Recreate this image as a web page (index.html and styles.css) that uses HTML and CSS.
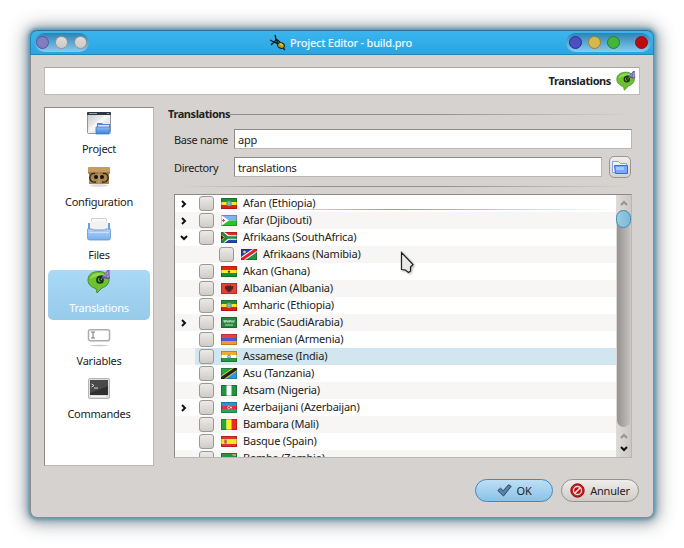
FILE: index.html
```html
<!DOCTYPE html>
<html lang="en">
<head>
<meta charset="utf-8">
<title>Project Editor - build.pro</title>
<link rel="stylesheet" href="styles.css">
</head>
<body>
<svg class="defs" width="0" height="0">
  <defs>
    <linearGradient id="gBlue" x1="0" y1="0" x2="0" y2="1"><stop offset="0" stop-color="#8dbdf5"/><stop offset="1" stop-color="#3b7fdc"/></linearGradient>
    <linearGradient id="gBox" x1="0" y1="0" x2="0" y2="1"><stop offset="0" stop-color="#b7d4f7"/><stop offset="1" stop-color="#76aeee"/></linearGradient>
    <linearGradient id="gScreen" x1="0" y1="0" x2="1" y2="1"><stop offset="0" stop-color="#c4c4c4"/><stop offset=".5" stop-color="#f2f2f2"/><stop offset="1" stop-color="#d4d4d4"/></linearGradient>
    <symbol id="bubble" viewBox="0 0 24 24">
      <path d="M1 10C1 4 6 1.500 12 1.500S22 5 22 10c0 4-3 6.500-7 8l-5 5-1-4.500C4 17.500 1 14 1 10z" fill="#6cc22c" stroke="#4c8a35"/>
      <path d="M3 9c1-4 5-6 9-6 3 0 6 1 7 3-5-1-12 0-16 3z" fill="#8edc53"/>
      <path d="M17 8c-1-3-7-2-7 2s6 4 6 0-4-2-3 0 3 1 3-1" fill="none" stroke="#19351d" stroke-width="1.700"/>
      <path d="M21 9V2l-4 5h6" fill="none" stroke="#665095" stroke-width="3"/>
      <path d="M21 8V2l-4 4h6" fill="none" stroke="#a795d0" stroke-width="1.200"/>
    </symbol>
    <symbol id="ethiopia" viewBox="0 0 16 11"><path fill="#258b35" d="M0 0h16v4H0z"/><path fill="#f6e826" d="M0 4h16v3H0z"/><path fill="#e51c16" d="M0 7h16v4H0z"/><circle cx="8" cy="5.500" r="2.800" fill="#5aa6b4"/><circle cx="8" cy="5.500" r="1" fill="#c5cf58"/></symbol>
    <symbol id="djibouti" viewBox="0 0 16 11"><path fill="#78b5ef" d="M0 0h16v5.500H0z"/><path fill="#22c629" d="M0 5.500h16V11H0z"/><path fill="#fff" d="M0 0l8 5.500L0 11z"/><path fill="#e73f3f" d="M2 4h1v1h1v1H3v1H2V6H1V5h1z"/></symbol>
    <symbol id="southafrica" viewBox="0 0 16 11"><path fill="#e32a24" d="M0 0h16v4H0z"/><path fill="#2647af" d="M0 7h16v4H0z"/><path d="M0 0l7 5.500h9M0 11l7-5.500" stroke="#fff" stroke-width="4.500" fill="none"/><path fill="#222" d="M0 1l5 4.500L0 10z"/><path d="M0 0l6.500 5.500H16M0 11l6.500-5.500" stroke="#24893a" stroke-width="2.500" fill="none"/><path d="M0 2.500l3.500 3L0 8.500" stroke="#f1c943" fill="#222"/></symbol>
    <symbol id="namibia" viewBox="0 0 16 11"><path fill="#2a45a0" d="M0 0h16L0 11z"/><path fill="#20933d" d="M16 0v11H0z"/><path d="M0 11L16 0" stroke="#fff" stroke-width="5"/><path d="M0 11L16 0" stroke="#e2212d" stroke-width="3"/><circle cx="3.500" cy="3" r="1.300" fill="#f6d64f"/></symbol>
    <symbol id="ghana" viewBox="0 0 16 11"><path fill="#ec2219" d="M0 0h16v4H0z"/><path fill="#faf02b" d="M0 4h16v3H0z"/><path fill="#159334" d="M0 7h16v4H0z"/><path fill="#38381d" d="M8 4l.5 1H9.500L8.800 6l.2 1L8 6.500 7 7l.2-1-.7-1h1z"/></symbol>
    <symbol id="albania" viewBox="0 0 16 11"><path fill="#e34036" d="M0 0h16v11H0z"/><path fill="#4c2522" d="M6 2l2 1 2-1v1.500l2-.5v3l-2 1 1 1-2 .5-1 1-1-1L5 8l1-1-2-1V3l2 .5z"/></symbol>
    <symbol id="saudi" viewBox="0 0 16 11"><path fill="#27843a" d="M0 0h16v11H0z"/><path d="M3 3v2h2V3m1 2h3V3m1 2h3V3M3 4h9M4 8h8" fill="none" stroke="#cae6cc" stroke-width=".9"/></symbol>
    <symbol id="armenia" viewBox="0 0 16 11"><path fill="#e64436" d="M0 0h16v4H0z"/><path fill="#4c5bd0" d="M0 4h16v3H0z"/><path fill="#f09a30" d="M0 7h16v4H0z"/></symbol>
    <symbol id="india" viewBox="0 0 16 11"><path fill="#efad2b" d="M0 0h16v4H0z"/><path fill="#fff" d="M0 4h16v3H0z"/><path fill="#239846" d="M0 7h16v4H0z"/><circle cx="8" cy="5.500" r="1.500" fill="#c0c8e8" stroke="#6776b4" stroke-width=".8"/></symbol>
    <symbol id="tanzania" viewBox="0 0 16 11"><path fill="#29a744" d="M0 0h16L0 11z"/><path fill="#239bea" d="M16 0v11H0z"/><path d="M0 11L16 0" stroke="#f1d32d" stroke-width="5"/><path d="M0 11L16 0" stroke="#222" stroke-width="3.200"/></symbol>
    <symbol id="nigeria" viewBox="0 0 16 11"><path fill="#219343" d="M0 0h16v11H0z"/><path fill="#fafafa" d="M5.500 0h5v11h-5z"/></symbol>
    <symbol id="azerbaijan" viewBox="0 0 16 11"><path fill="#2d94c9" d="M0 0h16v4H0z"/><path fill="#e03339" d="M0 4h16v3H0z"/><path fill="#2fa05a" d="M0 7h16v4H0z"/><path d="M8.500 4.500a1.200 1.200 0 1 0 0 2M10 4.500v2M9 5.500h2" fill="none" stroke="#fff" stroke-width=".8"/></symbol>
    <symbol id="mali" viewBox="0 0 16 11"><path fill="#29a33a" d="M0 0h5.500v11H0z"/><path fill="#faf21e" d="M5.500 0h5v11h-5z"/><path fill="#ec2a28" d="M10.500 0H16v11h-5.500z"/></symbol>
    <symbol id="spain" viewBox="0 0 16 11"><path fill="#e8302a" d="M0 0h16v11H0z"/><path fill="#fbe529" d="M0 3h16v5H0z"/><path fill="#c78058" d="M3 3.500h3v4H3z"/><path fill="#e54837" d="M4 4.500h1v3H4z"/></symbol>
    <symbol id="zambia" viewBox="0 0 16 11"><path fill="#249443" d="M0 0h16v11H0z"/><path fill="#ee9239" d="M11 1h4v2h-3z"/></symbol>
    <symbol id="right" viewBox="0 0 8 8"><path d="M2 1l3 3-3 3" fill="none" stroke="#111" stroke-width="2"/></symbol>
    <symbol id="down" viewBox="0 0 8 6"><path d="M1 1l3 3 3-3" fill="none" stroke="#111" stroke-width="2"/></symbol>
    <symbol id="up" viewBox="0 0 8 6"><path d="M1 5l3-3 3 3" fill="none" stroke="#98948f" stroke-width="2"/></symbol>
  </defs>
</svg>

<main class="window">
  <header class="titlebar">
    <div class="lights lights-left"><i class="light violet"></i><i class="light grey"></i><i class="light grey"></i></div>
    <div class="window-title">
      <svg width="17" height="17" viewBox="0 0 17 17"><path d="M1 6l4 2 4 2M6 1l1 4 2 5M5 8l-3 3M7 5l4 3M6 6l4 1M12 12l4 4M5 7l4 3" stroke="#101a22" stroke-width="1.300" fill="none"/><ellipse cx="12" cy="11.500" rx="3.500" ry="2.700" fill="#b79d0d" stroke="#20200c" transform="rotate(25 12 11.500)"/><path d="M11 10h2v2" stroke="#e8dc55" fill="none"/></svg>
      <h1>Project Editor - build.pro</h1>
    </div>
    <div class="lights lights-right"><i class="light blue"></i><i class="light yellow"></i><i class="light green"></i><i class="light red"></i></div>
  </header>

  <div class="content">
    <div class="banner"><strong>Translations</strong><svg width="20" height="20"><use href="#bubble"/></svg></div>
    <div class="columns">
      <nav class="sidebar">
        <a class="page"><svg width="24" height="24" viewBox="0 0 24 24"><rect x=".5" y="1.500" width="23" height="21" rx="1" fill="url(#gScreen)" stroke="#92979b"/><path d="M0 4V2q0-1 1-1h22q1 0 1 1v2z" fill="#2d3742"/><path d="M2 2.500h8m10 0h2" stroke="#96a0a8"/><path d="M2 17L18 5h4L5 20z" fill="#fff" opacity=".45"/><path d="M10 12h5l1 1h7v3H10z" fill="#468ae0"/><path d="M11 14h11v3H11z" fill="#d2e6fb"/><path d="M9 16h14l-1 7H9z" fill="url(#gBlue)" stroke="#3975c2" stroke-width=".7"/></svg><span>Project</span></a>
        <a class="page"><svg width="24" height="24" viewBox="0 0 24 24"><ellipse cx="12" cy="21.500" rx="9" ry="1.500" fill="#ddd"/><path d="M2 8h20v12H2z" fill="#ab8750"/><path d="M1 4q0-1 1-1h20q1 0 1 1v5H1z" fill="#c49b61"/><path d="M1 9h22" stroke="#84602f"/><path d="M8 9.500c-7-1-7 10 1 8.500M16 9.500c7-1 7 10-1 8.500" fill="none" stroke="#2c2318" stroke-width="1.300"/><circle cx="9" cy="13" r="2" fill="#141414"/><circle cx="15" cy="13" r="2" fill="#141414"/><path d="M12 9v11" stroke="#c5a36d"/></svg><span>Configuration</span></a>
        <a class="page"><svg width="24" height="24" viewBox="0 0 24 24"><path d="M1 6h22v8H1z" fill="#6ba0e0"/><path d="M4.500 1.500h15V13h-15z" fill="#fafafa" stroke="#d0d0d0"/><path d="M3 4h18v8H3z" fill="#f2f2f2"/><path d="M.5 12h5l1 1h11l1-1h5v9q0 2-2 2h-19q-2 0-2-2z" fill="url(#gBox)" stroke="#6395d0" stroke-width=".8"/><path d="M2 15.500h20" stroke="#dcebfc" opacity=".7"/></svg><span>Files</span></a>
        <a class="page current"><svg width="24" height="24"><use href="#bubble"/></svg><span>Translations</span></a>
        <a class="page"><svg class="low" width="24" height="24" viewBox="0 0 24 24"><rect x="1.500" y="4.700" width="21" height="11" rx="2" fill="#fff" stroke="#acacac" stroke-width="1.500"/><path d="M4 7h4M6 7v6M4 13h4" stroke="#777"/><ellipse cx="12" cy="20.500" rx="9" ry=".8" fill="#c9c9c9"/></svg><span>Variables</span></a>
        <a class="page"><svg class="low" width="24" height="24" viewBox="0 0 24 24"><rect x="1.500" y=".5" width="21" height="20" rx="1.500" fill="#ddd" stroke="#b5b5b5"/><path d="M3 2h18v15H3z" fill="#30302f"/><path d="M3 2h18v6L3 15z" fill="#494949"/><path d="M4.500 6l2.500 1.500L4.500 9M7 10h4" fill="none" stroke="#d5ddd3"/><path d="M4 18.500h15" stroke="#f6f6f6"/></svg><span>Commandes</span></a>
      </nav>

      <section class="panel">
        <h2><span>Translations</span></h2>
        <label class="field"><span class="caption">Base name</span><span class="input">app</span></label>
        <div class="field directory"><span class="caption">Directory</span><span class="input">translations</span>
          <button class="browse"><svg width="16" height="14" viewBox="0 0 16 14"><path d="M.5 1.500h6l2 2h6v9h-14z" fill="#edf3ff" stroke="#8ba3de"/><path d="M2.500 5.500h13v8h-12z" fill="#76a9fb" stroke="#3a6ade"/><path d="M4 7h8v3H4z" fill="#a6c9ff"/></svg></button>
        </div>
        <div class="rule"></div>
        <div class="tree">
          <ul class="rows">
            <li class="first"><svg class="arrow"><use href="#right"/></svg><i class="check"></i><svg class="flag"><use href="#ethiopia"/></svg><span>Afan (Ethiopia)</span></li>
            <li><svg class="arrow"><use href="#right"/></svg><i class="check"></i><svg class="flag"><use href="#djibouti"/></svg><span>Afar (Djibouti)</span></li>
            <li><svg class="arrow"><use href="#down"/></svg><i class="check"></i><svg class="flag"><use href="#southafrica"/></svg><span>Afrikaans (SouthAfrica)</span></li>
            <li class="child"><i class="arrow"></i><i class="check"></i><svg class="flag"><use href="#namibia"/></svg><span>Afrikaans (Namibia)</span></li>
            <li><i class="arrow"></i><i class="check"></i><svg class="flag"><use href="#ghana"/></svg><span>Akan (Ghana)</span></li>
            <li><i class="arrow"></i><i class="check"></i><svg class="flag"><use href="#albania"/></svg><span>Albanian (Albania)</span></li>
            <li><i class="arrow"></i><i class="check"></i><svg class="flag"><use href="#ethiopia"/></svg><span>Amharic (Ethiopia)</span></li>
            <li><svg class="arrow"><use href="#right"/></svg><i class="check"></i><svg class="flag"><use href="#saudi"/></svg><span>Arabic (SaudiArabia)</span></li>
            <li><i class="arrow"></i><i class="check"></i><svg class="flag"><use href="#armenia"/></svg><span>Armenian (Armenia)</span></li>
            <li class="hover"><i class="arrow"></i><i class="check"></i><svg class="flag"><use href="#india"/></svg><span>Assamese (India)</span></li>
            <li><i class="arrow"></i><i class="check"></i><svg class="flag"><use href="#tanzania"/></svg><span>Asu (Tanzania)</span></li>
            <li><i class="arrow"></i><i class="check"></i><svg class="flag"><use href="#nigeria"/></svg><span>Atsam (Nigeria)</span></li>
            <li><svg class="arrow"><use href="#right"/></svg><i class="check"></i><svg class="flag"><use href="#azerbaijan"/></svg><span>Azerbaijani (Azerbaijan)</span></li>
            <li><i class="arrow"></i><i class="check"></i><svg class="flag"><use href="#mali"/></svg><span>Bambara (Mali)</span></li>
            <li><i class="arrow"></i><i class="check"></i><svg class="flag"><use href="#spain"/></svg><span>Basque (Spain)</span></li>
            <li><i class="arrow"></i><i class="check"></i><svg class="flag"><use href="#zambia"/></svg><span>Bemba (Zambia)</span></li>
          </ul>
          <div class="scrollbar">
            <svg class="step" width="8" height="6"><use href="#up"/></svg>
            <div class="track"><div class="thumb"></div></div>
            <svg class="step" width="8" height="6"><use href="#up"/></svg>
            <svg class="step" width="8" height="6"><use href="#down"/></svg>
          </div>
        </div>
      </section>
    </div>
    <footer>
      <button class="btn primary"><svg width="15" height="13" viewBox="0 0 15 13"><path d="M.8 6.500l2.700-2.300 2.700 2.600 5.300-6 2.700 1.500L6.500 12z" fill="#5d82a8" stroke="#2c4565"/></svg><span>OK</span></button>
      <button class="btn"><svg width="15" height="15" viewBox="0 0 15 15"><circle cx="7.500" cy="7.500" r="6.700" fill="#c91e1e" stroke="#8b1111"/><circle cx="7.500" cy="7.500" r="4" fill="#b31313" stroke="#f0dcdc" stroke-width="1.300"/><path d="M4.500 10.500l6-6" stroke="#f6e9e9" stroke-width="1.600"/></svg><span>Annuler</span></button>
    </footer>
  </div>
</main>
<svg class="pointer" width="16" height="24" viewBox="0 0 16 24"><path d="M1.500 1.500v17l4 .5 3 2.500 2-1.500v-4l2.500-2.500z" fill="#e9e9e9" stroke="#222" stroke-width="1.200"/></svg>
</body>
</html>
```
FILE: styles.css
```css
* { box-sizing: border-box; }
body {
  margin: 0;
  width: 684px;
  height: 548px;
  padding: 30px;
  overflow: hidden;
  background: #fff;
  color: #222;
  font: 11px/17px "Noto Sans", sans-serif;
  letter-spacing: -0.2px;
}
.defs { position: absolute; }
h1, h2, ul { margin: 0; padding: 0; }
button { font: inherit; letter-spacing: inherit; color: inherit; padding: 0; }
svg { flex: none; display: block; }

.window {
  width: 624px;
  height: 488px;
  border-radius: 7px;
  background: #d6d2cf;
  border: 1px solid #8f8b89;
  border-top: 0;
  box-shadow: 0 0 3px 1px #5b9ab9, 0 0 7px 2px rgba(50, 115, 150, .55), 0 1px 17px 5px rgba(45, 55, 65, .42);
}
.titlebar {
  display: flex;
  justify-content: space-between;
  align-items: center;
  height: 25px;
  margin: 0 -1px;
  padding: 0 2px 0 4px;
  border: 1px solid #2585b6;
  border-top-color: #2a708f;
  border-radius: 7px 7px 0 0;
  background: linear-gradient(#3cb5ee, #29a5e1);
}
.lights {
  display: flex;
  align-items: center;
  height: 19px;
  border-radius: 10px;
  background: linear-gradient(#2b83b3, #86ccf0);
}
.lights-left { width: 54px; gap: 6px; padding-left: 1px; }
.lights-right { width: 85px; gap: 6px; padding-left: 3px; }
.light { width: 13px; height: 13px; border-radius: 50%; border: 1px solid; }
.violet { background: #827dc0; border-color: #5656a0; }
.grey { background: linear-gradient(#deddda, #cbc9c4); border-color: #9a958c; }
.blue { background: #4b4fc0; border-color: #27308d; }
.yellow { background: #d3b84b; border-color: #98803a; }
.green { background: #43b53f; border-color: #268130; }
.red { background: #bd0c0c; border-color: #7e1820; margin-left: 9px; }
.window-title { display: flex; align-items: center; gap: 4px; margin-left: 26px; }
h1 { font-size: 11px; font-weight: 500; color: #eefaff; letter-spacing: -0.22px; margin-top: -1px; }

.content { padding: 12px 13px 0; }
.banner {
  display: flex;
  align-items: center;
  justify-content: flex-end;
  gap: 5px;
  height: 28px;
  padding-right: 3px;
  background: #fff;
  border: 1px solid #bdbab8;
  border-top-color: #a9a5a3;
}
.banner strong { letter-spacing: -0.4px; margin-top: -1px; }
.columns { display: flex; margin-top: 12px; }
.sidebar {
  width: 110px;
  height: 359px;
  padding: 3px;
  background: #fff;
  border: 1px solid #b9b6b4;
  border-top-color: #8f8987;
  border-left-color: #8f8987;
}
.page {
  display: flex;
  flex-direction: column;
  align-items: center;
  height: 50px;
  margin-bottom: 3px;
  border-radius: 5px;
}
.page span { margin-top: 5px; letter-spacing: -0.25px; }
.page .low { margin: 2px 0 -2px; }
.page.current { background: linear-gradient(#a9d9f5, #97cbea); color: #fff; }

.panel { width: 464px; margin-left: 14px; }
h2 { display: flex; align-items: center; height: 15px; font-size: 11px; line-height: 15px; letter-spacing: -0.42px; }
h2 span { margin-top: -2px; }
h2::after { content: ""; flex: 1; height: 1px; background: linear-gradient(90deg, #938e8b, #938e8b 50%, #d6d2cf); }
.field { display: flex; align-items: center; height: 20px; margin: 7px 0 0 6px; }
.directory { margin-top: 8px; }
.caption { width: 60px; letter-spacing: -0.35px; }
.input {
  flex: 1;
  height: 20px;
  padding: 1px 3px;
  background: #fff;
  border: 1px solid #b9b6b4;
  border-top-color: #8f8987;
  border-left-color: #8f8987;
}
.browse {
  display: grid;
  place-items: center;
  width: 22px;
  height: 22px;
  margin: 0 1px 0 7px;
  border: 1px solid #9b9690;
  border-radius: 5px;
  background: linear-gradient(#efedeb, #d6d3cf);
}
.rule { height: 1px; margin: 9px 0 0 12px; background: linear-gradient(90deg, #d6d2cf, #989390 30%, #989390 60%, #d6d2cf); }
.tree {
  display: flex;
  height: 264px;
  margin: 7px 0 0 6px;
  overflow: hidden;
  background: #fff;
  border: 1px solid #b9b6b4;
  border-top-color: #8f8987;
  border-left-color: #8f8987;
}
.rows { flex: 1; list-style: none; }
.rows li { display: flex; align-items: center; height: 17px; }
.rows li:nth-child(even) { background: #f7f6f5; }
.rows li span { margin-top: -2px; }
.rows .first { background: linear-gradient(90deg, #fff 15%, #58b0d6 50%, #fff) 0 14px / 100% 1px no-repeat; }
.rows .hover, .rows .hover:nth-child(even) { background: linear-gradient(90deg, #f7f6f5 20px, #d2e6f0 20px); }
.arrow { width: 8px; height: 8px; margin: 0 11px 0 5px; }
.check {
  width: 15px;
  height: 15px;
  border: 1px solid #9c9892;
  border-radius: 3px;
  background: linear-gradient(#eceae8, #cfccc8);
}
.child .check { margin-left: 20px; }
.flag { width: 16px; height: 11px; margin: 0 6px 0 7px; outline: 1px solid rgba(0, 0, 0, .22); outline-offset: -1px; }
.scrollbar {
  display: flex;
  flex-direction: column;
  align-items: center;
  width: 15px;
  padding: 5px 0 4px;
  background: linear-gradient(90deg, #dedbd8, #cbc8c5);
}
.track { width: 13px; height: 217px; margin: 4px 0 6px; border-radius: 7px; background: linear-gradient(90deg, #96928f, #c3c0bd); }
.thumb { width: 15px; height: 18px; margin-left: -1px; border: 1px solid #428dad; border-radius: 8px; background: linear-gradient(90deg, #9acbe4, #7db9d8); }
.step + .step { margin-top: 7px; }

footer { display: flex; justify-content: flex-end; gap: 8px; margin: 13px 1px 0 0; }
.btn {
  display: flex;
  align-items: center;
  justify-content: center;
  gap: 5px;
  width: 78px;
  height: 23px;
  border: 1px solid #96928b;
  border-radius: 12px;
  background: linear-gradient(#efedeb, #cfccc8);
  letter-spacing: -0.2px;
}
.btn span { margin-top: -1px; }
.primary { border-color: #4289bd; background: linear-gradient(#bddff5, #8bc2e7); }
.pointer { position: absolute; left: 400px; top: 251px; filter: drop-shadow(1px 1px 1px rgba(0, 0, 0, .35)); }
```
